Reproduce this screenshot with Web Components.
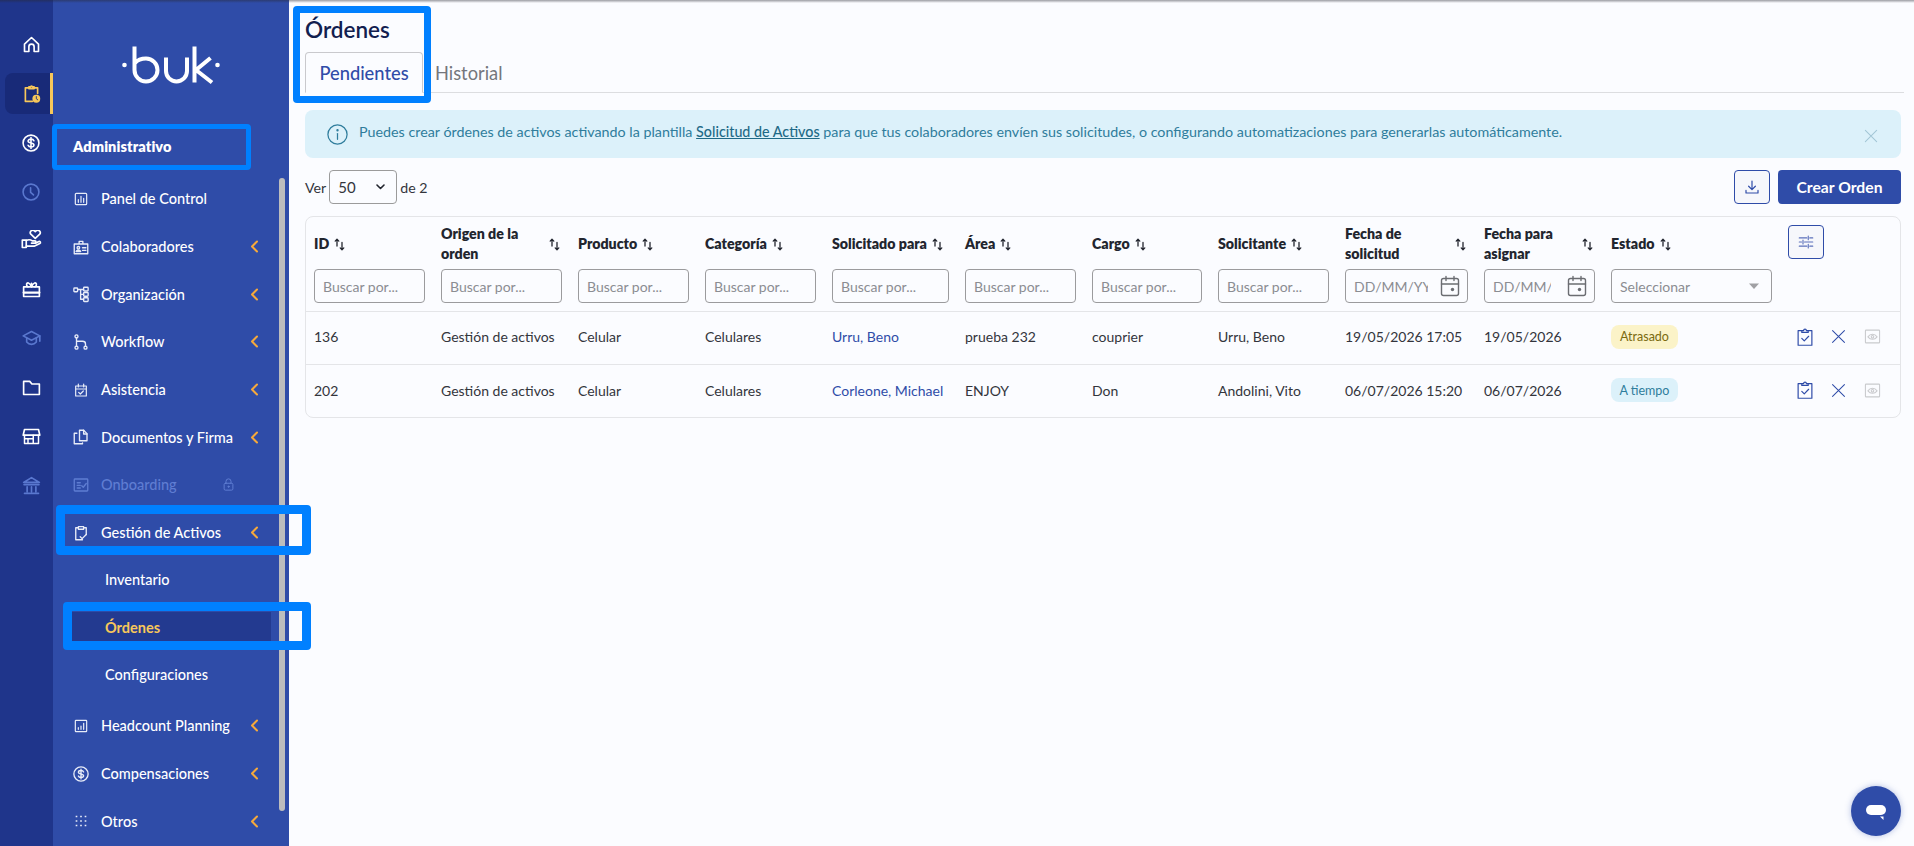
<!DOCTYPE html>
<html lang="es">
<head>
<meta charset="utf-8">
<title>Órdenes</title>
<style>
   html, body { margin: 0; height: 100%; }
   body { font-family: Lato, "Open Sans", sans-serif; overflow: hidden; background: #fbfcff; color: #22252e; }
</style>
</head>
<body>
<bk-app>
   <bk-rail slot="rail"></bk-rail>
   <bk-sidebar slot="sidebar">
      <bk-nav-item icon="chart" small arrow="none">Panel de Control</bk-nav-item>
      <bk-nav-item icon="badge">Colaboradores</bk-nav-item>
      <bk-nav-item icon="org">Organización</bk-nav-item>
      <bk-nav-item icon="flow">Workflow</bk-nav-item>
      <bk-nav-item icon="calcheck" small>Asistencia</bk-nav-item>
      <bk-nav-item icon="docs">Documentos y Firma</bk-nav-item>
      <bk-nav-item icon="onboard" arrow="lock" dim>Onboarding</bk-nav-item>
      <bk-nav-item icon="clipcheck">Gestión de Activos</bk-nav-item>
      <bk-nav-item sub class="first-sub">Inventario</bk-nav-item>
      <bk-nav-item sub active>Órdenes</bk-nav-item>
      <bk-nav-item sub>Configuraciones</bk-nav-item>
      <bk-nav-item icon="head" small class="after-sub">Headcount Planning</bk-nav-item>
      <bk-nav-item icon="dollar">Compensaciones</bk-nav-item>
      <bk-nav-item icon="dots" small>Otros</bk-nav-item>
   </bk-sidebar>
   <bk-page>
      <bk-tabs title="Órdenes"></bk-tabs>
      <bk-alert>Puedes crear órdenes de activos activando la plantilla <a>Solicitud de Activos</a> para que tus colaboradores envíen sus solicitudes, o configurando automatizaciones para generarlas automáticamente.</bk-alert>
      <bk-toolbar></bk-toolbar>
      <bk-orders-table></bk-orders-table>
   </bk-page>
</bk-app>
<!-- blue annotation frames drawn over the screenshot -->
<bk-mark style="left:293px;top:6px;width:138px;height:97px;border-width:7px"></bk-mark>
<bk-mark style="left:52px;top:124px;width:199px;height:46px;border-width:5px"></bk-mark>
<bk-mark style="left:56px;top:505px;width:255px;height:50px;border-width:9px"></bk-mark>
<bk-mark style="left:63px;top:602px;width:248px;height:48px;border-width:9px"></bk-mark>
<bk-chat></bk-chat>

<script>
// all icons in a 24 box, drawn with currentColor strokes
const ICONS = {
   home: '<path d="M4 11.5 12 4l8 7.5V20h-5v-5.5a3 3 0 0 0-6 0V20H4z"/>',
   clipclock: '<path d="M9 5.5H5V21h8M15 5.5h4V12"/><path d="M9 6.5V4.5h2a1 1 0 0 1 2 0h2v2z"/><circle cx="17.5" cy="18" r="4.5" fill="currentColor" stroke="none"/><path d="M17.5 15.5V18l1.6 1.2" stroke="#182a78" stroke-width="1"/>',
   dollar: '<circle cx="12" cy="12" r="9.5"/><path d="M15.5 9.3c-.5-1.3-1.8-2-3.5-2-2 0-3.5 1-3.5 2.4 0 3.2 7 1.5 7 4.6 0 1.4-1.5 2.4-3.5 2.4-1.7 0-3-.7-3.5-2M12 5.5v13"/>',
   clock: '<circle cx="12" cy="12" r="9.5"/><path d="M11.5 7v5.5l3.5 3"/>',
   hand: '<path d="M16.3 9.5 11.5 5a2.8 2.8 0 0 1 4-4l.8.8.8-.8a2.8 2.8 0 0 1 4 4z"/><path d="M1.5 11.5H6V20H1.5z"/><path d="M6 12c3-1.5 5-1 7 .5h3c1.5 0 1.5 2.5 0 2.5h-4"/><path d="M6 18.5h9l6.5-3c1.5-.8.5-3-1-2.3l-4 1.8"/>',
   gift: '<path d="M3 9h18v11H3z"/><path d="M3 15.5h18" stroke-width="2.5"/><path d="M8 9c-3-2-1.5-5 .5-4.5C10.5 5 12 9 12 9s1.5-4 3.5-4.5C17.5 4 19 7 16 9M12 5v4"/>',
   grad: '<path d="M12 4 2.5 9 12 14l9.5-5z"/><path d="M6.5 11.5V16c3 3.5 8 3.5 11 0v-4.5M21.5 9v6"/>',
   folder: '<path d="M3 5h7l2.5 3H21v12H3z"/>',
   store: '<path d="M4 4h16M4 4 2.5 10.5h19L20 4"/><path d="M4 10.5V20h16v-9.5M5 14.5h9M8 14.5V20M14 10.5V20" stroke-width="1.7"/>',
   bank: '<path d="M12 3 3 8.5h18zM4 21h16M3.5 11h17M7 13.5V19M12 13.5V19M17 13.5V19"/>',
   chart: '<rect x="3.5" y="3.5" width="17" height="17" rx="1.5"/><path d="M8 17v-4M12 17V8M16 17v-6"/>',
   badge: '<path d="M3 8h18v13H3zM9.5 8V4.5h5V8"/><circle cx="8.5" cy="13" r="1.7"/><path d="M5.5 18c.5-2.5 5.5-2.5 6 0zM14 13h4.5M14 16.5h4.5"/>',
   org: '<rect x="2.5" y="4" width="5" height="5" rx="1"/><rect x="15.5" y="3" width="6" height="5" rx="1"/><rect x="15.5" y="10" width="6" height="5" rx="1"/><rect x="15.5" y="17" width="6" height="5" rx="1"/><path d="M7.5 6h8M11.5 6v13h4M11.5 12.5h4"/>',
   flow: '<circle cx="6" cy="4.5" r="2"/><circle cx="6" cy="19.5" r="2"/><circle cx="18" cy="19.5" r="2"/><path d="M6 6.5v11M6 11h8c2.500 0 4 1.500 4 3.500v3"/>',
   calcheck: '<path d="M4 6h16v15H4zM4 10.5h16M8 3v4.5M16 3v4.5M8.5 15.5l2.5 2.5 4.5-4.5"/>',
   docs: '<path d="M10 3h5.5L20 7.5V17H10z"/><path d="M15.5 3v5H20M6.5 7H3v14h11v-1"/>',
   onboard: '<rect x="3" y="4" width="18" height="16" rx="1"/><path d="M7 9h4M7 12.5h4M7 16h4M13 13l2 2 4-5"/>',
   clipcheck: '<path d="M8.5 5H5v16h9M15.5 5H19v9"/><path d="M8.5 7V3.5h7V7zM11 17l2.500 2.500L19 14"/>',
   clipok: '<path d="M8.5 5H4.500v16h15V5h-4"/><path d="M8.5 7V5h2a1.500 1.500 0 0 1 3 0h2v2zM8.500 13.500l2.700 2.700 4.800-5"/>',
   head: '<rect x="3.5" y="3.5" width="17" height="17" rx="1"/><path d="M8 17v-2.500M12 17v-5M16 17V8"/>',
   dots: '<path d="M4 4h2.500v2.500H4zM10.750 4h2.500v2.500h-2.500zM17.500 4H20v2.500h-2.500zM4 10.750h2.500v2.500H4zM10.750 10.750h2.500v2.500h-2.500zM17.500 10.750H20v2.500h-2.500zM4 17.500h2.500V20H4zM10.750 17.500h2.500V20h-2.500zM17.500 17.500H20V20h-2.500z" fill="currentColor" stroke="none"/>',
   lock: '<rect x="5" y="10" width="14" height="11" rx="2"/><path d="M8 10V7a4 4 0 0 1 8 0v3"/><circle cx="12" cy="15.5" r="1" fill="currentColor"/>',
   info: '<circle cx="12" cy="12" r="10"/><path d="M12 11v6"/><circle cx="12" cy="7.5" r=".6" fill="currentColor"/>',
   close: '<path d="M4.5 4.5l15 15M19.5 4.5l-15 15"/>',
   download: '<path d="M12 4v11M7.5 11l4.5 4.5 4.5-4.5M4 16.5V20h16v-3.5"/>',
   sliders: '<path d="M3 6.5h10M17 6.5h4M15 4v5M3 12h3M10 12h11M8 9.5v5M3 17.5h10M17 17.5h4M15 15v5"/>',
   calendar: '<rect x="3.5" y="4.5" width="17" height="17" rx="2"/><path d="M3.5 10h17M8 2.500v4M16 2.500v4"/><circle cx="14.5" cy="15.5" r="1.7" fill="currentColor" stroke="none"/>',
   eye: '<rect x="2" y="3" width="20" height="18" rx="1"/><path d="M5.5 12.5c3.5-5 9.5-5 13 0-3.5 4.5-9.5 4.5-13 0z"/><circle cx="12" cy="12.5" r="1.8"/>'
};

function svgIcon(name, size, weight = 1.6) {
   return `<svg width="${size}" height="${size}" viewBox="0 0 24 24" fill="none" stroke="currentColor" stroke-width="${weight}" stroke-linecap="round" stroke-linejoin="round" aria-hidden="true">${ICONS[name]}</svg>`;
}

const SORT_ICON = `<svg width="11" height="13" viewBox="0 0 11 13" fill="none" stroke="#22252e" stroke-width="1.3" stroke-linecap="round" stroke-linejoin="round" aria-hidden="true"><path d="M3 8V1.3M1.2 3.1 3 1.3l1.8 1.8M8 4.5v7.2M6.2 9.9 8 11.7l1.8-1.8"/></svg>`;

class BkApp extends HTMLElement {
   constructor() {
      super();
      this.attachShadow({mode: 'open'});
      this.shadowRoot.innerHTML = `
         <style>
         :host { display: flex; width: 100vw; height: 100vh; position: relative; overflow: hidden; }
         .edge { position: absolute; left: 0; right: 0; top: 0; height: 3px; background: linear-gradient(rgba(40,40,50,.45), rgba(40,40,50,0)); }
         ::slotted(bk-page) { flex: 1; min-width: 0; }
         </style>
         <slot name="rail"></slot>
         <slot name="sidebar"></slot>
         <slot></slot>
         <div class="edge"></div>
      `;
   }
}

class BkRail extends HTMLElement {
   constructor() {
      super();
      this.attachShadow({mode: 'open'});
      const items = [
         ['home', ''], ['clipclock', 'active'], ['dollar', ''], ['clock', 'dim'], ['hand', ''],
         ['gift', ''], ['grad', 'dim'], ['folder', ''], ['store', ''], ['bank', 'dim']
      ];
      const html = items.map(([icon, cls]) => `<div class="item ${cls}"><div class="box">${svgIcon(icon, icon === 'dollar' || icon === 'clock' ? 20 : 21, 1.9)}</div></div>`).join('');
      this.shadowRoot.innerHTML = `
         <style>
         :host { display: block; width: 53px; flex: none; box-sizing: border-box; padding-top: 20px; background: #1f358b; color: #fff; }
         .item { height: 49px; display: flex; align-items: center; padding-left: 5px; }
         .box { width: 45px; height: 41px; display: flex; align-items: center; justify-content: center; padding-left: 7px; box-sizing: border-box; border-radius: 8px 0 0 8px; }
         .active .box { width: 48px; background: #182a78; color: #f7c75a; border-right: 3px solid #f7c75a; }
         .dim { color: #5a78cf; }
         </style>
         ${html}
      `;
   }
}

class BkSidebar extends HTMLElement {
   constructor() {
      super();
      this.attachShadow({mode: 'open'});
      this.shadowRoot.innerHTML = `
         <style>
         :host { display: block; position: relative; width: 236px; flex: none; background: #2f4ca8; color: #fff; }
         .logo { height: 124px; display: flex; padding-left: 68px; box-sizing: border-box; }
         .logo svg { margin-top: 44px; }
         h2 { margin: 0; height: 46px; box-sizing: border-box; padding-left: 20px; line-height: 46px; font-size: 14.5px; font-weight: 800; letter-spacing: .1px; }
         nav { padding-top: 5px; display: flex; flex-direction: column; padding-right: 18px; }
         ::slotted(.after-sub) { margin-top: 3.5px; }
         ::slotted(.first-sub) { margin-top: -1px; }
         .thumb { position: absolute; left: 226px; top: 178px; width: 6px; height: 633px; border-radius: 3px; background: #bdbdbd; }
         </style>
         <div class="logo">
            <svg width="100" height="42" viewBox="120 44 100 42" fill="none" stroke="#fff" stroke-width="4" stroke-linecap="butt" aria-hidden="true">
               <circle cx="123.5" cy="65" r="2.3" fill="#fff" stroke="none"/>
               <path d="M133.5 46.5V70A11.5 11.5 0 1 0 145 58.5C140 58.5 136.5 60 134 63"/>
               <path d="M165 57.5V71a10.5 10.5 0 0 0 21 0V57.5"/>
               <path d="M193.5 46.5V82.5M209.5 58 195 70l16 12.5"/>
               <circle cx="216.5" cy="65" r="2.3" fill="#fff" stroke="none"/>
            </svg>
         </div>
         <h2>Administrativo</h2>
         <nav><slot></slot></nav>
         <div class="thumb"></div>
      `;
   }
}

class BkNavItem extends HTMLElement {
   constructor() {
      super();
      this.attachShadow({mode: 'open'});
      const icon = this.getAttribute('icon');
      const arrow = this.getAttribute('arrow');
      const size = this.hasAttribute('small') ? 16 : 18;
      let end = '<svg class="end" width="9" height="13" viewBox="0 0 9 13" fill="none" stroke="#f6a93b" stroke-width="2" stroke-linecap="round" stroke-linejoin="round"><path d="M7 1.5 2 6.5l5 5"/></svg>';
      if (arrow === 'lock') end = `<span class="end lock">${svgIcon('lock', 15)}</span>`;
      this.shadowRoot.innerHTML = `
         <style>
         :host { display: flex; align-items: center; height: 47.7px; padding-left: 19px; font-size: 14.5px; font-weight: 500; color: #fff; position: relative; }
         :host([dim]) { color: #5f7dd2; }
         :host([sub]) { padding-left: 0; }
         :host([active]) .label { color: #f7c75a; font-weight: 700; }
         :host([active]) .bg { position: absolute; left: 0; right: 0; top: 9px; bottom: 9px; background: #233a90; margin-left: 19px; }
         .icon { width: 18px; height: 18px; display: flex; align-items: center; justify-content: center; margin-right: 11px; color: #e8ecf8; }
         :host([dim]) .icon { color: #5f7dd2; }
         .label { flex: 1; position: relative; white-space: nowrap; }
         :host([sub]) .label { padding-left: 52px; }
         .end { flex: none; margin-right: 12px; }
         .lock { display: flex; margin-right: 35px; }
         :host([arrow="none"]) .end, :host([sub]) .end { visibility: hidden; }
         </style>
         <div class="bg"></div>
         ${icon ? `<span class="icon">${svgIcon(icon, size, 1.8)}</span>` : ''}
         <span class="label"><slot></slot></span>
         ${end}
      `;
   }
}

class BkPage extends HTMLElement {
   constructor() {
      super();
      this.attachShadow({mode: 'open'});
      this.shadowRoot.innerHTML = `
         <style>
         :host { display: block; box-sizing: border-box; padding: 17px 13px 0 16px; background: #fbfcff; }
         </style>
         <slot></slot>
      `;
   }
}

class BkTabs extends HTMLElement {
   constructor() {
      super();
      this.attachShadow({mode: 'open'});
      this.shadowRoot.innerHTML = `
         <style>
         :host { display: block; margin-right: -3px; }
         h1 { margin: 0; padding-top: 1px; box-sizing: border-box; font-size: 22.5px; line-height: 24px; font-weight: 600; color: #12204f; height: 35px; }
         .bar { display: flex; height: 40px; border-bottom: 1px solid #dcdde0; font-size: 18.3px; }
         .tab { display: flex; align-items: center; justify-content: center; box-sizing: border-box; height: 41px; }
         .on { width: 118px; border: 1px solid #c9c9cd; border-bottom-color: #fbfcff; border-radius: 4px 4px 0 0; color: #2f4ca8; font-weight: 500; }
         .off { padding-left: 12px; color: #74767c; }
         </style>
         <h1>${this.getAttribute('title')}</h1>
         <div class="bar"><div class="tab on">Pendientes</div><div class="tab off">Historial</div></div>
      `;
   }
}

class BkAlert extends HTMLElement {
   constructor() {
      super();
      this.attachShadow({mode: 'open'});
      this.shadowRoot.innerHTML = `
         <style>
         :host { display: flex; align-items: flex-start; height: 48px; margin-top: 17px; box-sizing: border-box; padding: 12px 0 0 21px; background: #dcf1fa; border-radius: 8px; color: #2f7d9c; font-size: 14.3px; line-height: 20px; position: relative; }
         .info { display: flex; margin-right: 10px; margin-top: 1px; }
         .text { white-space: nowrap; }
         .x { position: absolute; right: 21px; top: 17px; display: flex; color: #a3c6d6; }
         </style>
         <span class="info">${svgIcon('info', 23, 1.3)}</span>
         <span class="text"><slot></slot></span>
         <span class="x">${svgIcon('close', 18, 1.4)}</span>
      `;
      const link = this.querySelector('a');
      link.style.cssText = 'text-decoration: underline; font-weight: 500; color: #1f6a87;';
   }
}

class BkToolbar extends HTMLElement {
   constructor() {
      super();
      this.attachShadow({mode: 'open'});
      this.shadowRoot.innerHTML = `
         <style>
         :host { display: flex; align-items: flex-start; height: 46px; margin-top: 12px; font-size: 14.2px; color: #33353c; }
         .pager { display: flex; align-items: center; gap: 3px; height: 34px; }
         .sel { width: 68px; height: 34px; box-sizing: border-box; padding: 0 11px 0 8px; display: flex; align-items: center; justify-content: space-between; border: 1px solid #9b9b9b; border-radius: 4px; font-size: 15px; }
         .sp { flex: 1; }
         button { font: inherit; height: 34px; border-radius: 4px; box-sizing: border-box; padding: 0; cursor: pointer; }
         .icon { width: 36px; border: 1px solid #2f4ca8; background: #f6f7fb; color: #2f4ca8; display: flex; align-items: center; justify-content: center; margin-right: 8px; }
         .main { width: 123px; border: 0; background: #2f4ca8; color: #fff; font-size: 15.7px; font-weight: 700; }
         </style>
         <div class="pager">Ver<div class="sel">50<svg width="9" height="6" viewBox="0 0 9 6" fill="none" stroke="#22252e" stroke-width="1.6" stroke-linecap="round" stroke-linejoin="round"><path d="M1 1l3.5 3.5L8 1"/></svg></div>de 2</div>
         <div class="sp"></div>
         <button class="icon">${svgIcon('download', 18)}</button>
         <button class="main">Crear Orden</button>
      `;
   }
}

class BkField extends HTMLElement {
   constructor() {
      super();
      this.attachShadow({mode: 'open'});
      const kind = this.getAttribute('kind') || 'text';
      let end = '';
      if (kind === 'date') end = `<span class="cal">${svgIcon('calendar', 24, 1.4)}</span>`;
      if (kind === 'select') end = '<svg width="12" height="7" viewBox="0 0 12 7"><path d="M1 .5h10L6 6z" fill="#a0a0a4"/></svg>';
      this.shadowRoot.innerHTML = `
         <style>
         :host { display: flex; align-items: center; height: 34px; box-sizing: border-box; padding: 0 8px; border: 1px solid #9b9b9d; border-radius: 4px; color: #8b8d92; font-size: 14px; }
         :host([kind="select"]) { padding-right: 11px; }
         .text { flex: 1; min-width: 0; overflow: hidden; white-space: nowrap; }
         :host([kind="date"]) .text { flex: none; width: var(--clip, 74px); }
         .cal { display: flex; margin-left: auto; margin-right: -3px; color: #6b6d72; }
         </style>
         <span class="text"><slot></slot></span>
         ${end}
      `;
   }
}

class BkBadge extends HTMLElement {
   constructor() {
      super();
      this.attachShadow({mode: 'open'});
      this.shadowRoot.innerHTML = `
         <style>
         :host { display: inline-flex; align-items: center; justify-content: center; width: 67px; height: 24px; border-radius: 8px; font-size: 12.5px; background: #dcf1fa; color: #2f7d9c; }
         :host([tone="late"]) { background: #fbf3c8; color: #7a6a10; }
         </style>
         <slot></slot>
      `;
   }
}

class BkChat extends HTMLElement {
   constructor() {
      super();
      this.attachShadow({mode: 'open'});
      this.shadowRoot.innerHTML = `
         <style>
         :host { position: fixed; left: 1851px; top: 786px; width: 50px; height: 50px; border-radius: 50%; background: #2f4ca8; box-shadow: 0 0 6px rgba(47,76,168,.35); }
         svg { position: absolute; left: 14px; top: 18px; }
         </style>
         <svg width="22" height="17" viewBox="0 0 22 17"><rect x="1" y="1" width="20" height="10" rx="5" fill="#fff"/><path d="M15 12.5h3.5V16z" fill="#fff"/></svg>
      `;
   }
}

class BkMark extends HTMLElement {
   constructor() {
      super();
      this.attachShadow({mode: 'open'});
      this.shadowRoot.innerHTML = `
         <style>
         :host { position: fixed; box-sizing: border-box; border: 5px solid #0080ff; border-radius: 4px; pointer-events: none; }
         </style>
      `;
   }
}

const HEADERS = [
   ['ID'], ['Origen de la<br>orden', 1], ['Producto'], ['Categoría'], ['Solicitado para'], ['Área'],
   ['Cargo'], ['Solicitante'], ['Fecha de<br>solicitud', 1, 'date', '74px'], ['Fecha para<br>asignar', 1, 'date', '58px'], ['Estado', 0, 'select']
];

const ORDERS = [
   { id: '136', origin: 'Gestión de activos', product: 'Celular', category: 'Celulares', target: 'Urru, Beno', area: 'prueba 232', role: 'couprier', by: 'Urru, Beno', asked: '19/05/2026 17:05', assign: '19/05/2026', status: 'Atrasado', tone: 'late' },
   { id: '202', origin: 'Gestión de activos', product: 'Celular', category: 'Celulares', target: 'Corleone, Michael', area: 'ENJOY', role: 'Don', by: 'Andolini, Vito', asked: '06/07/2026 15:20', assign: '06/07/2026', status: 'A tiempo', tone: 'ok' }
];

class BkOrdersTable extends HTMLElement {
   constructor() {
      super();
      this.attachShadow({mode: 'open'});
      const head = HEADERS.map(([label, wrap, kind, clip]) => {
         const text = kind === 'date' ? 'DD/MM/YY' : kind === 'select' ? 'Seleccionar' : 'Buscar por...';
         return `<div class="th">
            <div class="title ${wrap ? 'wrap' : ''}"><span>${label}</span>${SORT_ICON}</div>
            <bk-field kind="${kind || 'text'}" style="--clip:${clip || '74px'}">${text}</bk-field>
         </div>`;
      }).join('');
      const rows = ORDERS.map(o => `<div class="row tr">
            <div>${o.id}</div><div>${o.origin}</div><div>${o.product}</div><div>${o.category}</div>
            <div class="link">${o.target}</div><div>${o.area}</div><div>${o.role}</div><div>${o.by}</div>
            <div>${o.asked}</div><div>${o.assign}</div>
            <div><bk-badge tone="${o.tone}">${o.status}</bk-badge></div>
            <div class="actions">
               <span>${svgIcon('clipok', 22, 1.3)}</span><span>${svgIcon('close', 19, 1.3)}</span><span class="off">${svgIcon('eye', 17, 1.5)}</span>
            </div>
         </div>`).join('');
      this.shadowRoot.innerHTML = `
         <style>
         :host { display: block; box-sizing: border-box; height: 202px; border: 1px solid #e4e5e8; border-radius: 8px; font-size: 14px; color: #33353c; }
         .row { display: grid; grid-template-columns: 111px 121px 111px 111px 117px 111px 110px 111px 123px 111px 161px 96px; column-gap: 16px; padding: 0 7px 0 8px; }
         .thead { height: 95px; border-bottom: 1px solid #e4e5e8; box-sizing: border-box; padding-top: 7px; }
         .title { height: 40px; margin-bottom: 5px; display: flex; align-items: center; gap: 5px; font-size: 14.2px; font-weight: 800; line-height: 20px; color: #22252e; white-space: nowrap; }
         .title.wrap { justify-content: space-between; padding-right: 2px; }
         .title svg { flex: none; }
         .tools { width: 36px; height: 34px; box-sizing: border-box; margin-top: 1px; border: 1px solid #2f4ca8; border-radius: 4px; background: #f6f7fb; color: #5b70bb; display: flex; align-items: center; justify-content: center; }
         .tr { height: 53px; box-sizing: border-box; padding-bottom: 3px; align-items: center; border-bottom: 1px solid #e4e5e8; white-space: nowrap; }
         .tr:last-child { border-bottom: 0; }
         .link { color: #2f4ca8; }
         .actions { display: flex; align-items: center; gap: 11px; color: #2f4ca8; padding-left: 5px; }
         .actions span { display: flex; width: 24px; justify-content: center; }
         .actions .off { color: #c9cacd; }
         </style>
         <div class="row thead">${head}<div><div class="tools">${svgIcon('sliders', 18, 1.5)}</div></div></div>
         ${rows}
      `;
   }
}

customElements.define('bk-app', BkApp);
customElements.define('bk-rail', BkRail);
customElements.define('bk-sidebar', BkSidebar);
customElements.define('bk-nav-item', BkNavItem);
customElements.define('bk-page', BkPage);
customElements.define('bk-tabs', BkTabs);
customElements.define('bk-alert', BkAlert);
customElements.define('bk-toolbar', BkToolbar);
customElements.define('bk-field', BkField);
customElements.define('bk-badge', BkBadge);
customElements.define('bk-chat', BkChat);
customElements.define('bk-mark', BkMark);
customElements.define('bk-orders-table', BkOrdersTable);
</script>
</body>
</html>
